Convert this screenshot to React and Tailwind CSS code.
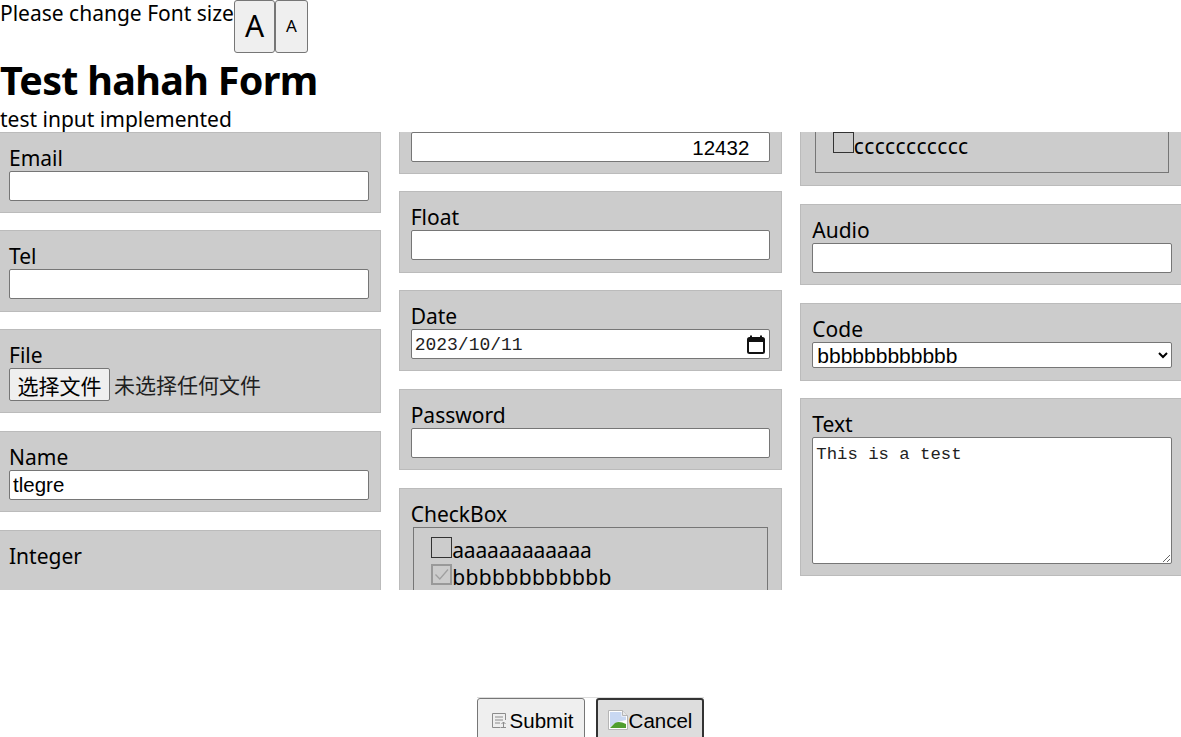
const sans = "font-['Noto_Sans','Noto_Sans_CJK_SC',sans-serif]";

function Field({ label, children, mb = "mb-[17.6px]" }) {
  return (
    <div className={`border border-[#bbbbbb] bg-[#cccccc] px-[11px] pt-[12px] pb-[11.2px] ${mb}`}>
      <div className="h-[26px] leading-[26px]">{label}</div>
      {children}
    </div>
  );
}

const inputCls =
  "block w-full h-[30px] border border-[#767676] rounded-[2px] bg-white px-[3px] pt-[2px] text-black text-[20.5px] font-['Liberation_Sans',sans-serif] outline-none";

function Check({ checked, children, rowCls, textCls }) {
  return (
    <div className={`flex break-inside-avoid items-start ${rowCls}`}>
      <span
        className={`flex h-[21px] w-[21px] shrink-0 items-center justify-center ${
          checked ? "border-2 border-[#999999]" : "border border-[#333333]"
        }`}
      >
        {checked && (
          <svg width="17" height="17" viewBox="0 0 17 17" fill="none" stroke="#a0a0a0" strokeWidth="1.3">
            <path d="M2.5 8.5 L6.8 13 L15 3.5" />
          </svg>
        )}
      </span>
      <span className={`h-[26px] leading-[28px] ${textCls}`}>{children}</span>
    </div>
  );
}

export default function App() {
  return (
    <div className={`h-[737px] w-[1181px] overflow-hidden bg-white text-black text-[21px] ${sans}`}>
      <div className="flex h-[53px] items-start">
        <span className="leading-[26px]">Please change Font size</span>
        <button className="h-[53px] w-[41px] rounded-[3px] border border-[#767676] bg-[#efefef] pb-[2px] text-[30px] leading-none">
          A
        </button>
        <button className="h-[53px] w-[33px] rounded-[3px] border border-[#767676] bg-[#efefef] pb-[3px] text-[17px] leading-none">
          A
        </button>
      </div>
      <h1 className="h-[54px] text-[39.5px] leading-[54px] font-bold tracking-[-0.7px]">Test hahah Form</h1>
      <p className="h-[25px] leading-[25px]">test input implemented</p>

      <div className="ml-[-3px] h-[458px] w-[1187px] columns-3 gap-[18px] [column-fill:auto]">
        <Field label="Email" mb="mb-[17.2px]">
          <input className={inputCls} />
        </Field>
        <Field label="Tel">
          <input className={inputCls} />
        </Field>
        <div className="mb-[17.7px] h-[84px] break-inside-avoid border border-[#bbbbbb] bg-[#cccccc] pl-[11px] pt-[12px]">
          <div className="h-[26px] leading-[26px]">File</div>
          <div className="flex h-[32.5px] items-center text-[#1f1f1f]">
            <button className="h-[32.5px] w-[101px] rounded-[2px] border border-[#767676] bg-[#efefef] pt-[2px] text-black">
              选择文件
            </button>
            <span className="ml-[4px] pt-[2px]">未选择任何文件</span>
          </div>
        </div>
        <Field label="Name">
          <input className={inputCls} defaultValue="tlegre" />
        </Field>
        <Field label="Integer" mb="mb-[17.2px]">
          <input className={`${inputCls} pr-[20px] text-right`} defaultValue="12432" />
        </Field>
        <Field label="Float">
          <input className={inputCls} />
        </Field>
        <Field label="Date">
          <div className="flex h-[30px] items-center justify-between rounded-[2px] border border-[#767676] bg-white pl-[3px] pr-[4px] font-['Liberation_Mono',monospace] text-[18px] text-[#222222]">
            <span className="pt-[2px]">2023/10/11</span>
            <svg width="18" height="19" viewBox="0 0 18 19" fill="none">
              <path d="M4 0.5v3M14 0.5v3" stroke="#111" strokeWidth="2" />
              <rect x="1" y="3" width="16" height="15" rx="1.5" stroke="#111" strokeWidth="2" />
              <rect x="1" y="3" width="16" height="4" fill="#111" />
            </svg>
          </div>
        </Field>
        <Field label="Password">
          <input type="password" className={inputCls} />
        </Field>
        <div className="mb-[17.7px] border border-[#bbbbbb] bg-[#cccccc] px-[11px] pt-[12px] pb-[12px]">
          <div className="h-[26px] leading-[26px]">CheckBox</div>
          <div className="mx-[2.5px] border border-[#767676] pl-[17px] pt-[9px] pb-[14px]">
            <Check rowCls="h-[27px]" textCls="mt-[-1px] tracking-[-0.15px]">aaaaaaaaaaaa</Check>
            <Check checked rowCls="h-[26px]" textCls="mt-[-1px] tracking-[0.4px]">bbbbbbbbbbbb</Check>
            <Check rowCls="h-[26px]" textCls="mt-0 tracking-[0.35px]">ccccccccccc</Check>
          </div>
        </div>
        <Field label="Audio" mb="mb-[17.8px]">
          <input className={inputCls} />
        </Field>
        <div className="mb-[17.4px] break-inside-avoid border border-[#bbbbbb] bg-[#cccccc] px-[11px] pt-[12px] pb-[12px]">
          <div className="h-[26px] leading-[26px]">Code</div>
          <select
            defaultValue="b"
            className="block h-[26px] w-full rounded-[2px] border border-[#767676] bg-white font-['Liberation_Sans',sans-serif] text-[21px] text-black"
          >
            <option value="a">aaaaaaaaaaaa</option>
            <option value="b">bbbbbbbbbbbb</option>
            <option value="c">ccccccccccc</option>
          </select>
        </div>
        <div className="break-inside-avoid border border-[#bbbbbb] bg-[#cccccc] px-[11px] pt-[12px] pb-[11px]">
          <div className="h-[26px] leading-[26px]">Text</div>
          <textarea
            className="block h-[127px] w-full rounded-[2px] border border-[#767676] bg-white pl-[3px] pr-[3px] pt-[5px] font-['Liberation_Mono',monospace] text-[17.3px] leading-[24px] text-[#222222] outline-none"
            defaultValue="This is a test"
          />
        </div>
      </div>

      <div className="mt-[107px] flex justify-center font-['Liberation_Sans',sans-serif] text-[20.5px]">
        <div className="flex gap-[11px] border-t border-[#dddddd]">
          <button className="flex h-[60px] w-[108px] items-start justify-center rounded-t-[3px] border border-[#767676] bg-[#efefef] pt-[10px] pl-[2px]">
            <svg className="mt-[3px]" width="16" height="17" viewBox="0 0 16 17" fill="none" stroke="#8c8c8c" strokeWidth="1">
              <path d="M14.5 8V1.5H1.5v14h8" />
              <path d="M4 5h8M4 8h8M4 11h5" />
              <path d="M12.5 15V10M10.5 12l2-2 2 2M10 15.5h5" />
            </svg>
            <span className="ml-[3px] leading-[24px]">Submit</span>
          </button>
          <button className="flex h-[60px] w-[108px] items-start justify-center rounded-t-[3px] border-2 border-[#333333] bg-[#dddddd] pt-[9px]">
            <svg className="mt-[1px]" width="20" height="20" viewBox="0 0 20 20">
              <path d="M0.5 0.5h14l5 5v14h-19z" fill="#ffffff" stroke="#b5b5b5" />
              <path d="M2 2h11.5v4.5H18V10l-9 2-7 5z" fill="#c9d8f2" />
              <path d="M2 18l5-5c3-2 7-1 11 1v4z" fill="#4f9e2f" />
              <path d="M14.5 0.5v5h5" fill="#e8e8e8" stroke="#b5b5b5" />
            </svg>
            <span className="ml-[1px] leading-[24px]">Cancel</span>
          </button>
        </div>
      </div>
    </div>
  );
}
